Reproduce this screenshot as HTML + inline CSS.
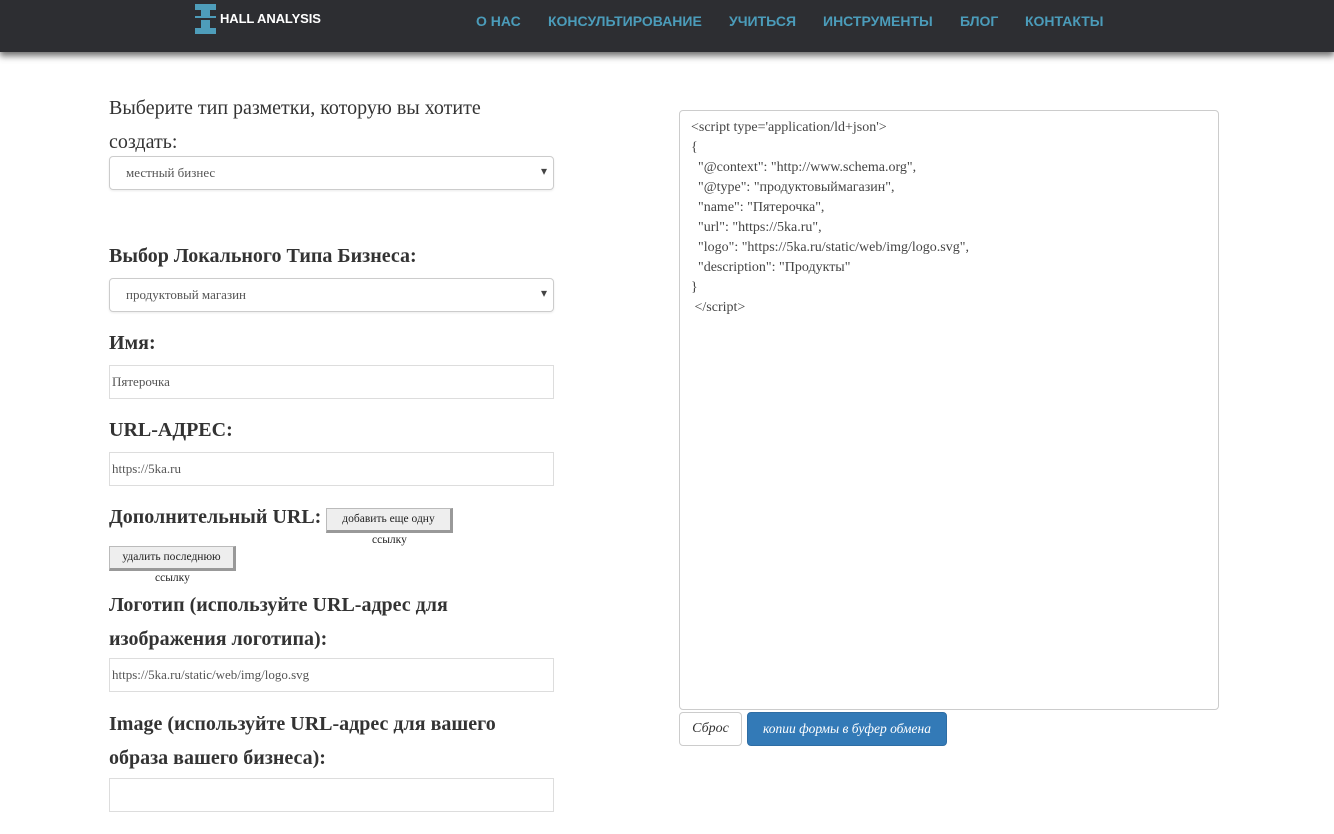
<!DOCTYPE html>
<html><head><meta charset="utf-8"><style>
*{box-sizing:border-box;margin:0;padding:0}
body{width:1334px;height:834px;background:#fff;position:relative;overflow:hidden;font-family:"Liberation Serif",serif;color:#333}
.hdr{position:absolute;left:0;top:0;width:1334px;height:52px;background:#2d2e32;box-shadow:0 3px 6px rgba(0,0,0,.5),0 6px 6px rgba(0,0,0,.15)}
.nav{position:absolute;top:13px;font-family:"Liberation Sans",sans-serif;font-weight:bold;font-size:14px;color:#4b9cba}
.a{position:absolute;white-space:nowrap}
.h{font-weight:bold;font-size:20px;color:#333}
.sel,.inp{position:absolute;left:109px;width:445px;height:34px;border:1px solid #ccc;font-size:13px;color:#555}
.sel{border-radius:4px;padding:8px 16px;box-shadow:0 1px 2px rgba(0,0,0,.08)}
.sel:after{content:"▾";position:absolute;right:6px;top:7px;font-size:12px;color:#444}
.inp{border-color:#ddd;padding:8px 2px}
.btn{position:absolute;height:25px;background:#eee;border:1px solid #bbb;border-right:3px solid #999;border-bottom:3px solid #999;font-size:11.5px;color:#222;text-align:center;padding-top:4px}
.sm{font-size:11.5px;color:#222}
.ta{position:absolute;left:679px;top:110px;width:540px;height:600px;border:1px solid #ccc;border-radius:4px;padding:7px 11px;font-size:14px;line-height:20px;color:#444;white-space:pre}
</style></head><body>
<div class="hdr">
<svg style="position:absolute;left:195px;top:4px" width="22" height="30" viewBox="0 0 22 30"><g fill="#4e9dba"><rect x="0" y="0" width="21" height="6"/><rect x="6" y="6" width="9" height="6"/><rect x="0" y="12" width="21" height="2"/><rect x="6" y="16" width="9" height="8"/><rect x="0" y="24" width="21" height="6"/></g></svg>
<div class="a" style="left:220px;top:11px;font-family:'Liberation Sans',sans-serif;font-weight:bold;font-size:13px;color:#fff;letter-spacing:-.1px">HALL ANALYSIS</div>
<div class="nav" style="left:476px">О НАС</div>
<div class="nav" style="left:548px">КОНСУЛЬТИРОВАНИЕ</div>
<div class="nav" style="left:729px">УЧИТЬСЯ</div>
<div class="nav" style="left:823px">ИНСТРУМЕНТЫ</div>
<div class="nav" style="left:960px">БЛОГ</div>
<div class="nav" style="left:1025px">КОНТАКТЫ</div>
</div>
<div class="a" style="left:109px;top:91px;font-size:20px;line-height:34px">Выберите тип разметки, которую вы хотите<br>создать:</div>
<div class="sel" style="top:156px">местный бизнес</div>
<div class="a h" style="left:109px;top:245px">Выбор Локального Типа Бизнеса:</div>
<div class="sel" style="top:278px">продуктовый магазин</div>
<div class="a h" style="left:109px;top:332px">Имя:</div>
<div class="inp" style="top:365px">Пятерочка</div>
<div class="a h" style="left:109px;top:419px">URL-АДРЕС:</div>
<div class="inp" style="top:452px">https://5ka.ru</div>
<div class="a h" style="left:109px;top:506px">Дополнительный URL:</div>
<div class="btn" style="left:326px;top:508px;width:127px">добавить еще одну</div>
<div class="a sm" style="left:372px;top:534px">ссылку</div>
<div class="btn" style="left:109px;top:546px;width:127px">удалить последнюю</div>
<div class="a sm" style="left:155px;top:572px">ссылку</div>
<div class="a h" style="left:109px;top:588px;line-height:34px">Логотип (используйте URL-адрес для<br>изображения логотипа):</div>
<div class="inp" style="top:658px">https://5ka.ru/static/web/img/logo.svg</div>
<div class="a h" style="left:109px;top:707px;line-height:34px">Image (используйте URL-адрес для вашего<br>образа вашего бизнеса):</div>
<div class="inp" style="top:778px"></div>
<div class="ta">&lt;script type='application/ld+json'&gt;
{
  "@context": "http://www.schema.org",
  "@type": "продуктовыймагазин",
  "name": "Пятерочка",
  "url": "https://5ka.ru",
  "logo": "https://5ka.ru/static/web/img/logo.svg",
  "description": "Продукты"
}
 &lt;/script&gt;</div>
<div class="a" style="left:679px;top:712px;width:63px;height:34px;border:1px solid #ccc;border-radius:4px;font-style:italic;font-size:14px;text-align:center;padding-top:8px">Сброс</div>
<div class="a" style="left:747px;top:712px;width:200px;height:34px;background:#337ab7;border:1px solid #2e6da4;border-radius:4px;font-style:italic;font-size:13.5px;color:#fff;text-align:center;padding-top:8px">копии формы в буфер обмена</div>
</body></html>
